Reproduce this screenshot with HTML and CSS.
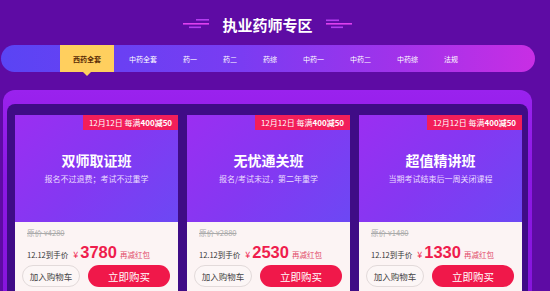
FILE: index.html
```html
<!DOCTYPE html>
<html lang="zh">
<head>
<meta charset="utf-8">
<link rel="stylesheet" href="styles.css">
</head>
<body>
<div class="page">
  <header class="head">
    <svg class="deco" width="30" height="12" viewBox="0 0 30 12">
      <rect x="15" y="0" width="13" height="1.6" fill="#b43cf0"/>
      <rect x="2" y="4" width="26" height="1.6" fill="#e040f0"/>
      <rect x="8" y="7.5" width="12" height="1.6" fill="#b43cf0"/>
    </svg>
    <h1 class="title">执业药师专区</h1>
    <svg class="deco" width="30" height="12" viewBox="0 0 30 12">
      <rect x="2" y="0.5" width="13" height="1.6" fill="#b43cf0"/>
      <rect x="2" y="4" width="26" height="1.6" fill="#e040f0"/>
      <rect x="7" y="7.5" width="12" height="1.6" fill="#b43cf0"/>
    </svg>
  </header>
  <nav class="nav">
    <span class="tab active">西药全套</span>
    <span class="tab first">中药全套</span>
    <span class="tab">药一</span>
    <span class="tab">药二</span>
    <span class="tab">药综</span>
    <span class="tab">中药一</span>
    <span class="tab">中药二</span>
    <span class="tab">中药综</span>
    <span class="tab">法规</span>
  </nav>
  <section class="outer">
    <div class="inner">
      <div class="card">
        <div class="top">
          <div class="badge">12月12日 每满<b>400减50</b></div>
          <div class="name">双师取证班</div>
          <div class="desc">报名不过退费；考试不过重学</div>
        </div>
        <div class="bottom">
          <div class="orig">原价 ¥4280</div>
          <div class="price"><span class="lbl">12.12到手价</span><span class="yen">¥</span><span class="num">3780</span><span class="red">再减红包</span></div>
          <div class="btns"><span class="cart">加入购物车</span><span class="buy">立即购买</span></div>
        </div>
      </div>
      <div class="card">
        <div class="top">
          <div class="badge">12月12日 每满<b>400减50</b></div>
          <div class="name">无忧通关班</div>
          <div class="desc">报名/考试未过，第二年重学</div>
        </div>
        <div class="bottom">
          <div class="orig">原价 ¥2880</div>
          <div class="price"><span class="lbl">12.12到手价</span><span class="yen">¥</span><span class="num">2530</span><span class="red">再减红包</span></div>
          <div class="btns"><span class="cart">加入购物车</span><span class="buy">立即购买</span></div>
        </div>
      </div>
      <div class="card">
        <div class="top">
          <div class="badge">12月12日 每满<b>400减50</b></div>
          <div class="name">超值精讲班</div>
          <div class="desc">当期考试结束后一周关闭课程</div>
        </div>
        <div class="bottom">
          <div class="orig">原价 ¥1480</div>
          <div class="price"><span class="lbl">12.12到手价</span><span class="yen">¥</span><span class="num">1330</span><span class="red">再减红包</span></div>
          <div class="btns"><span class="cart">加入购物车</span><span class="buy">立即购买</span></div>
        </div>
      </div>
    </div>
  </section>
</div>
</body>
</html>
```
FILE: styles.css
```css
* { box-sizing: border-box; }
html, body {
  margin: 0;
  padding: 0;
  width: 550px;
  height: 291px;
  overflow: hidden;
}
body {
  background: #5e0ba4;
  font-family: "Noto Sans CJK SC", "Liberation Sans", sans-serif;
  color: #fff;
}
.page {
  width: 550px;
}
.head {
  height: 45px;
  display: flex;
  align-items: center;
  justify-content: center;
  gap: 11px;
  padding-top: 4px;
  padding-right: 15px;
}
.deco { display: block; }
.title {
  margin: 0;
  font-size: 15px;
  line-height: 20px;
  font-weight: 700;
}
.nav {
  margin-left: 1px;
  width: 534px;
  height: 27px;
  border-radius: 14px;
  background: linear-gradient(90deg, #5a44f4 0%, #7a3cf2 45%, #a232ea 75%, #c82ee4 100%);
  display: flex;
  align-items: stretch;
  padding-left: 59px;
  font-size: 7px;
}
.tab {
  display: flex;
  align-items: center;
  justify-content: center;
  padding: 0 13px;
  color: #fff;
  position: relative;
}
.tab.first { margin-left: 2px; }
.tab.active {
  width: 54px;
  padding: 0;
  background: #ffcf5e;
  color: #5a2c06;
  font-weight: 700;
}
.tab.active::after {
  content: "";
  position: absolute;
  left: 50%;
  bottom: -4px;
  margin-left: -4px;
  border-left: 4px solid transparent;
  border-right: 4px solid transparent;
  border-top: 4px solid #ffcf5e;
}
.outer {
  margin: 18px 0 0 3px;
  width: 529px;
  height: 220px;
  border-radius: 12px 12px 0 0;
  background: linear-gradient(180deg, #9a22ee 0%, #8c18e4 40%, #8614dc 100%);
  padding: 14px 4px 0 4px;
}
.inner {
  height: 100%;
  border-radius: 8px 8px 0 0;
  background: #3f0c86;
  padding: 11px 8px 0 8px;
  display: flex;
  gap: 9px;
}
.card {
  width: 163px;
  flex: none;
  display: flex;
  flex-direction: column;
}
.top {
  position: relative;
  height: 107px;
  background: linear-gradient(135deg, #9b2ef2 0%, #8438f2 50%, #6c48f4 100%);
  padding-top: 35px;
  text-align: center;
}
.badge {
  position: absolute;
  top: 0;
  right: 0;
  width: 95px;
  height: 15px;
  background: #f21e5a;
  font-size: 8px;
  line-height: 15px;
  text-align: center;
  color: #fff;
  white-space: nowrap;
}
.badge b { font-weight: 700; }
.name {
  font-size: 14px;
  line-height: 20px;
  font-weight: 700;
}
.desc {
  margin-top: 3px;
  font-size: 8px;
  line-height: 12px;
  color: #eadcff;
}
.bottom {
  flex: 1;
  background: #fcf4f4;
  padding: 5px 0 0 7px;
}
.orig {
  padding-left: 5px;
  font-size: 7.5px;
  line-height: 12px;
  color: #aaa;
  text-decoration: line-through;
}
.price {
  margin-top: 3px;
  padding-left: 5px;
  height: 20px;
  display: flex;
  align-items: baseline;
  white-space: nowrap;
}
.lbl {
  font-size: 7.5px;
  color: #333;
}
.yen {
  margin-left: 5px;
  font-size: 9px;
  color: #ef1d4d;
}
.num {
  margin-left: 2px;
  font-family: "Liberation Sans", sans-serif;
  font-size: 16.5px;
  font-weight: 700;
  line-height: 20px;
  color: #ef1d4d;
}
.red {
  margin-left: 3px;
  font-size: 7.5px;
  color: #e24a6a;
}
.btns {
  margin-top: 3px;
  display: flex;
  gap: 8px;
}
.cart {
  width: 58px;
  height: 22px;
  border: 1px solid #e2dada;
  border-radius: 11px;
  background: #fcf6f6;
  color: #444;
  font-size: 8.5px;
  display: flex;
  align-items: center;
  justify-content: center;
}
.buy {
  width: 82px;
  height: 22px;
  border-radius: 11px;
  background: #f0184a;
  color: #fff;
  font-size: 10.5px;
  display: flex;
  align-items: center;
  justify-content: center;
}
```
